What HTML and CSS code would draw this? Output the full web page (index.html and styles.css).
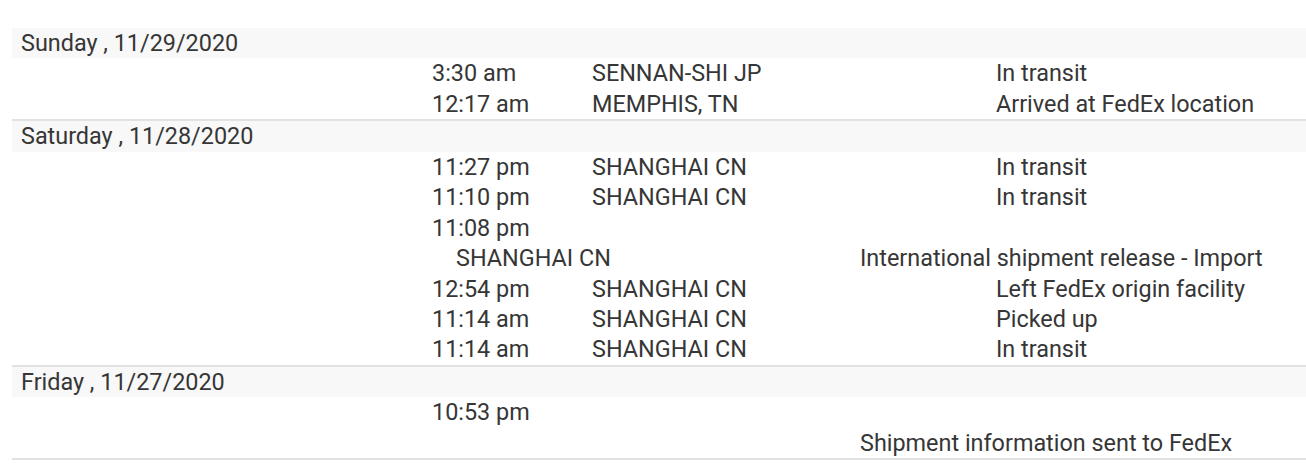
FILE: index.html
```html
<!DOCTYPE html>
<html lang="en">
<head>
<meta charset="utf-8">
<title>Shipment travel history</title>
<link rel="stylesheet" href="styles.css">
</head>
<body>
<div class="history">
  <section class="day">
    <div class="day__date">Sunday , 11/29/2020</div>
    <div class="event">
      <span class="event__time">3:30 am</span>
      <span class="event__loc">SENNAN-SHI JP</span>
      <span class="event__status">In transit</span>
    </div>
    <div class="event">
      <span class="event__time">12:17 am</span>
      <span class="event__loc">MEMPHIS, TN</span>
      <span class="event__status">Arrived at FedEx location</span>
    </div>
  </section>
  <section class="day">
    <div class="day__date">Saturday , 11/28/2020</div>
    <div class="event">
      <span class="event__time">11:27 pm</span>
      <span class="event__loc">SHANGHAI CN</span>
      <span class="event__status">In transit</span>
    </div>
    <div class="event">
      <span class="event__time">11:10 pm</span>
      <span class="event__loc">SHANGHAI CN</span>
      <span class="event__status">In transit</span>
    </div>
    <div class="event event--wrap">
      <span class="event__time">11:08 pm</span>
      <span class="event__loc">SHANGHAI CN</span>
      <span class="event__status">International shipment release - Import</span>
    </div>
    <div class="event">
      <span class="event__time">12:54 pm</span>
      <span class="event__loc">SHANGHAI CN</span>
      <span class="event__status">Left FedEx origin facility</span>
    </div>
    <div class="event">
      <span class="event__time">11:14 am</span>
      <span class="event__loc">SHANGHAI CN</span>
      <span class="event__status">Picked up</span>
    </div>
    <div class="event">
      <span class="event__time">11:14 am</span>
      <span class="event__loc">SHANGHAI CN</span>
      <span class="event__status">In transit</span>
    </div>
  </section>
  <section class="day">
    <div class="day__date">Friday , 11/27/2020</div>
    <div class="event event--wrap">
      <span class="event__time">10:53 pm</span>
      <span class="event__loc"></span>
      <span class="event__status">Shipment information sent to FedEx</span>
    </div>
  </section>
</div>
</body>
</html>
```

FILE: styles.css
```css
html, body {
  margin: 0;
  padding: 0;
  background: #ffffff;
}

body {
  font-family: Roboto, "Liberation Sans", Arial, sans-serif;
  font-size: 23.4px;
  color: #363636;
}

.history {
  padding: 28px 0 0 12px;
}

.day {
  border-bottom: 2px solid #e2e2e2;
}

.day__date {
  background: #f8f8f8;
  padding-left: 9px;
  line-height: 30.43px;
}

.event {
  display: flex;
  flex-wrap: wrap;
  padding-left: 420px;
  line-height: 30.43px;
}

.event > span {
  display: block;
  min-height: 30.43px;
}

.event__time {
  width: 160px;
}

.event__loc {
  width: 404px;
}

.event__status {
  flex: 1 1 auto;
}

.event--wrap .event__time {
  flex-basis: 100%;
}

.event--wrap .event__loc {
  margin-left: 24px;
}
```
